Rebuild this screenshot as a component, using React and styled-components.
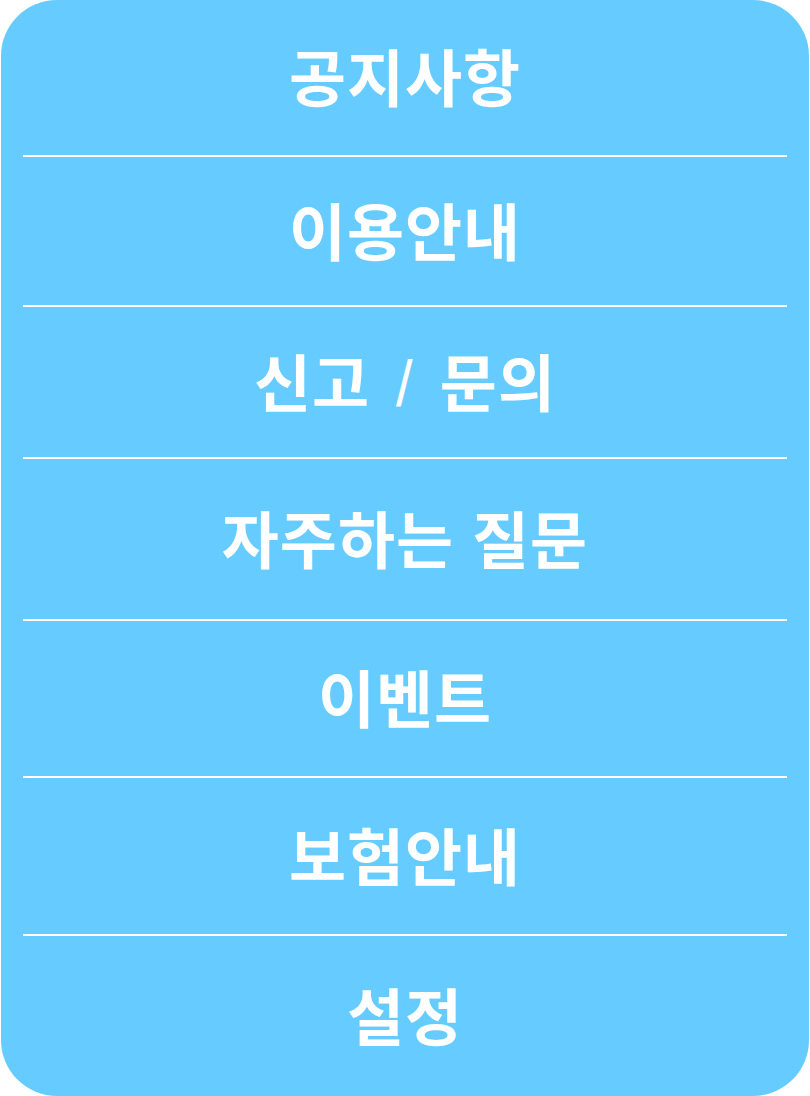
import React from "react";
import styled, { createGlobalStyle } from "styled-components";

const GlobalStyle = createGlobalStyle`
  html, body {
    margin: 0;
    padding: 0;
    background: #ffffff;
  }
  body {
    font-family: "Noto Sans CJK KR", "Noto Sans", sans-serif;
  }
`;

const Panel = styled.nav`
  display: flex;
  flex-direction: column;
  box-sizing: border-box;
  margin: 0 1px;
  height: 1096px;
  background-color: #66ccff;
  border-radius: 56px;
  overflow: hidden;
`;

const MenuItem = styled.a`
  display: flex;
  align-items: center;
  justify-content: center;
  box-sizing: border-box;
  height: ${props => props.$height}px;
  padding-bottom: 5px;
  color: #ffffff;
  font-size: 62px;
  font-weight: 700;
  letter-spacing: 1px;
  word-spacing: 3px;
  line-height: 1;
  white-space: pre;
  text-decoration: none;
  cursor: pointer;
`;

const Slash = styled.span`
  font-size: 48px;
  font-weight: 700;
  margin: 0 7px;
  position: relative;
  top: -3px;
`;

const Divider = styled.hr`
  flex: none;
  height: 2px;
  margin: 0 22px;
  border: 0;
  background-color: #ffffff;
`;

const items = [
  { label: "공지사항", height: 155 },
  { label: "이용안내", height: 148 },
  { label: ["신고 ", "/", " 문의"], height: 150 },
  { label: "자주하는 질문", height: 160 },
  { label: "이벤트", height: 155 },
  { label: "보험안내", height: 156 },
  { label: "설정", height: 160 }
];

const App = () => (
  <>
    <GlobalStyle />
    <Panel>
      {items.map((item, index) => (
        <React.Fragment key={index}>
          {index > 0 && <Divider />}
          <MenuItem $height={item.height}>
            {Array.isArray(item.label) ? (
              <>
                {item.label[0]}
                <Slash>{item.label[1]}</Slash>
                {item.label[2]}
              </>
            ) : (
              item.label
            )}
          </MenuItem>
        </React.Fragment>
      ))}
    </Panel>
  </>
);

export default App;
